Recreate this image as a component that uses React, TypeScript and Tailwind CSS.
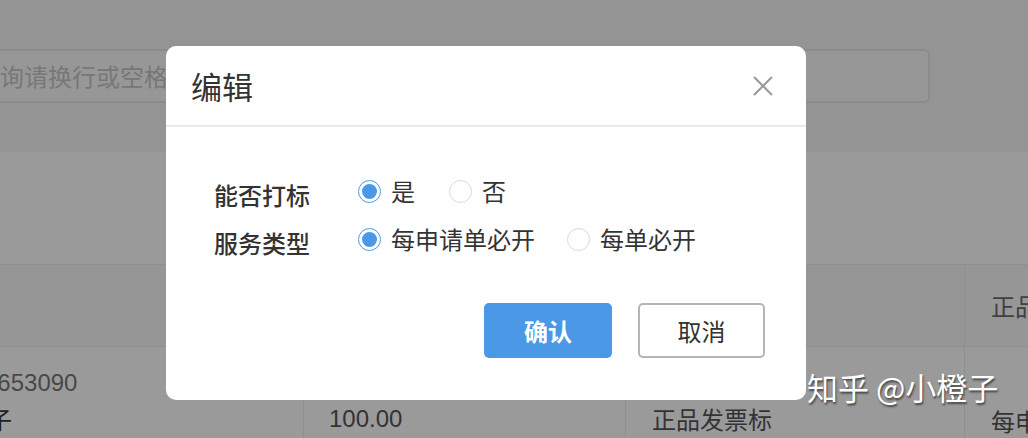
import React from "react";

const font = "font-['Noto_Sans_CJK_SC','Noto_Sans',sans-serif]";

function Radio({ checked, label }: { checked: boolean; label: string }) {
  return (
    <label className="flex items-center gap-[10px]">
      <span
        className={
          checked
            ? "flex h-[23px] w-[23px] items-center justify-center rounded-full border-[1.5px] border-[#4a98e6] bg-white"
            : "flex h-[23px] w-[23px] items-center justify-center rounded-full border-[1.5px] border-[#d9d9d9] bg-white"
        }
      >
        {checked && <span className="h-[15px] w-[15px] rounded-full bg-[#4a98e6]" />}
      </span>
      <span className="text-[24px] leading-none text-[#333]">{label}</span>
    </label>
  );
}

function EditDialog() {
  return (
    <div className="absolute left-[166px] top-[46px] h-[354px] w-[640px] rounded-[10px] bg-white">
      <div className="flex h-[81px] items-center justify-between border-b-2 border-[#e9e9e9] pl-[25px] pr-[33px]">
        <span className="text-[31px] leading-none text-[#333]">编辑</span>
        <svg width="20" height="20" viewBox="0 0 20 20" className="text-[#999]">
          <path d="M1 1L19 19M19 1L1 19" stroke="currentColor" strokeWidth="2" />
        </svg>
      </div>
      <div className="pt-[40px] pl-[48px] pr-[41px]">
        <div className="flex h-[48px] items-center">
          <span className="w-[144px] pt-[8px] text-[24px] font-medium leading-none text-[#333]">能否打标</span>
          <div className="flex items-center gap-[34px]">
            <Radio checked label="是" />
            <Radio checked={false} label="否" />
          </div>
        </div>
        <div className="flex h-[48px] items-center">
          <span className="w-[144px] pt-[8px] text-[24px] font-medium leading-none text-[#333]">服务类型</span>
          <div className="flex items-center gap-[32px]">
            <Radio checked label="每申请单必开" />
            <Radio checked={false} label="每单必开" />
          </div>
        </div>
        <div className="mt-[40px] flex justify-end gap-[26px]">
          <button className="h-[55px] w-[128px] rounded-[5px] bg-[#4a98e6] text-[24px] font-bold text-white">确认</button>
          <button className="h-[55px] w-[127px] rounded-[5px] border-2 border-[#b5b5b5] bg-white text-[24px] text-[#333]">取消</button>
        </div>
      </div>
    </div>
  );
}

export default function App() {
  return (
    <div className={`relative h-[438px] w-[1028px] overflow-hidden bg-[#9a9a9a] ${font}`}>
      <div className="h-[152px] bg-[#949494] pt-[49px]">
        <div className="-ml-[40px] flex h-[54px] w-[970px] items-center rounded-[6px] border-2 border-[#8b8b8b] bg-[#979797] pl-[14px] text-[24px] text-[#777]">
          查询请换行或空格分隔
        </div>
      </div>
      <div className="h-[112px]" />
      <div className="grid h-[83px] grid-cols-[303px_322px_339px_minmax(0,1fr)] border-y border-[#8f8f8f] bg-[#969696]">
        <div />
        <div className="border-l border-[#8f8f8f]" />
        <div className="border-l border-[#8f8f8f]" />
        <div className="flex items-center overflow-hidden whitespace-nowrap border-l border-[#8f8f8f] pl-[26px] text-[24px] text-[#404040]">正品发票标</div>
      </div>
      <div className="grid grid-cols-[303px_322px_339px_minmax(0,1fr)] text-[24px] leading-[36px]">
        <div className="whitespace-nowrap pt-[18px]">
          <div className="-ml-[16px] font-['Liberation_Sans',sans-serif] text-[#484848]">1653090</div>
          <div className="-ml-[36px] text-[#222]">橙子</div>
        </div>
        <div className="h-[92px] border-l border-[#8f8f8f] pl-[25px] pt-[54px] font-['Liberation_Sans',sans-serif] text-[#333]">100.00</div>
        <div className="whitespace-nowrap border-l border-[#8f8f8f] pl-[26px] pt-[54px] text-[#333]">正品发票标</div>
        <div className="overflow-hidden whitespace-nowrap border-l border-[#8f8f8f] pl-[26px] pt-[56px] text-[#333]">每申请单必开</div>
      </div>
      <EditDialog />
      <div className="absolute left-[807px] top-[371px] whitespace-nowrap text-[31px] leading-none text-white [text-shadow:1px_2px_2px_rgba(0,0,0,0.55)]">
        知乎 @小橙子
      </div>
    </div>
  );
}
